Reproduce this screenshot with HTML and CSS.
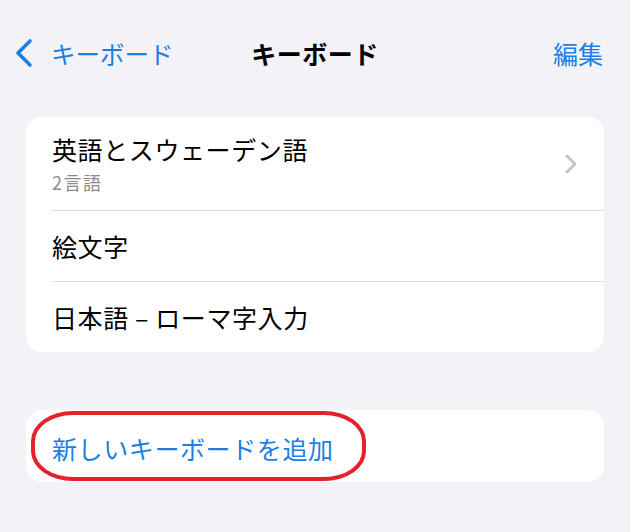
FILE: index.html
```html
<!DOCTYPE html>
<html lang="ja">
<head>
    <meta charset="UTF-8">
    <meta name="viewport" content="width=device-width, initial-scale=1.0">
    <title>キーボード</title>
    <link rel="stylesheet" href="styles.css">
</head>
<body>
    <!-- Navigation Bar -->
    <div class="nav">
        <a class="back" href="#">
            <svg class="back-icon" width="20" height="30" viewBox="0 0 20 30">
                <path d="M16 3 L4 15 L16 27" fill="none" stroke="#1c7fe6" stroke-width="3.6" stroke-linecap="round" stroke-linejoin="round"/>
            </svg>
            <span>キーボード</span>
        </a>
        <h1 class="title">キーボード</h1>
        <a class="edit" href="#">編集</a>
    </div>

    <!-- Keyboards -->
    <div class="card">
        <div class="row row-first">
            <div class="row-text">
                <div class="row-title">英語とスウェーデン語</div>
                <div class="row-sub">2言語</div>
            </div>
            <svg class="chevron" width="12" height="20" viewBox="0 0 12 20">
                <path d="M2 2 L10 10 L2 18" fill="none" stroke="#c4c4c7" stroke-width="2.8" stroke-linecap="round" stroke-linejoin="round"/>
            </svg>
        </div>
        <div class="row">
            <div class="row-title">絵文字</div>
        </div>
        <div class="row row-last">
            <div class="row-title">日本語 – ローマ字入力</div>
        </div>
    </div>

    <!-- Add keyboard -->
    <div class="card card-add">
        <div class="row row-last">
            <a class="add-link" href="#">新しいキーボードを追加</a>
        </div>
        <div class="mark"></div>
    </div>
</body>
</html>
```

FILE: styles.css
```css
body {
    margin: 0;
    padding: 0;
    background-color: #f2f2f7;
    font-family: "Noto Sans CJK JP", "Noto Sans", sans-serif;
    color: #000;
}
a {
    text-decoration: none;
    color: #1c7fe6;
}
.nav {
    display: grid;
    grid-template-columns: 1fr auto 1fr;
    align-items: center;
    height: 40px;
    padding: 33px 14px 0 14px;
}
.back {
    display: flex;
    align-items: center;
    gap: 17px;
    font-size: 24.5px;
}
.back-icon {
    display: block;
}
.title {
    margin: 0;
    font-size: 25px;
    font-weight: 700;
    line-height: 40px;
    letter-spacing: 0.5px;
}
.edit {
    justify-self: end;
    margin-right: 13px;
    font-size: 25px;
}
.card {
    background-color: #ffffff;
    border-radius: 16px;
    margin: 44px 26px 0 26px;
}
.card-add {
    position: relative;
    margin-top: 58px;
}
.row {
    display: flex;
    align-items: center;
    margin-left: 26px;
    padding-right: 27px;
    height: 70px;
    border-bottom: 1.5px solid #dedee2;
}
.row-first {
    height: 93px;
    justify-content: space-between;
}
.row-last {
    border-bottom: none;
}
.card-add .row {
    height: 72px;
    padding-top: 3px;
    box-sizing: border-box;
}
.row-title {
    font-size: 25px;
    line-height: 30px;
    letter-spacing: 0.6px;
}
.row-sub {
    font-size: 18px;
    line-height: 22px;
    margin-top: 7px;
    letter-spacing: 1.5px;
    color: #8a8a8e;
}
.chevron {
    display: block;
}
.add-link {
    font-size: 25px;
    line-height: 30px;
    letter-spacing: 0.6px;
}
.mark {
    position: absolute;
    left: 5px;
    top: 1px;
    width: 327px;
    height: 62px;
    border: 4px solid #e3222b;
    border-radius: 42px / 30px;
}
```
